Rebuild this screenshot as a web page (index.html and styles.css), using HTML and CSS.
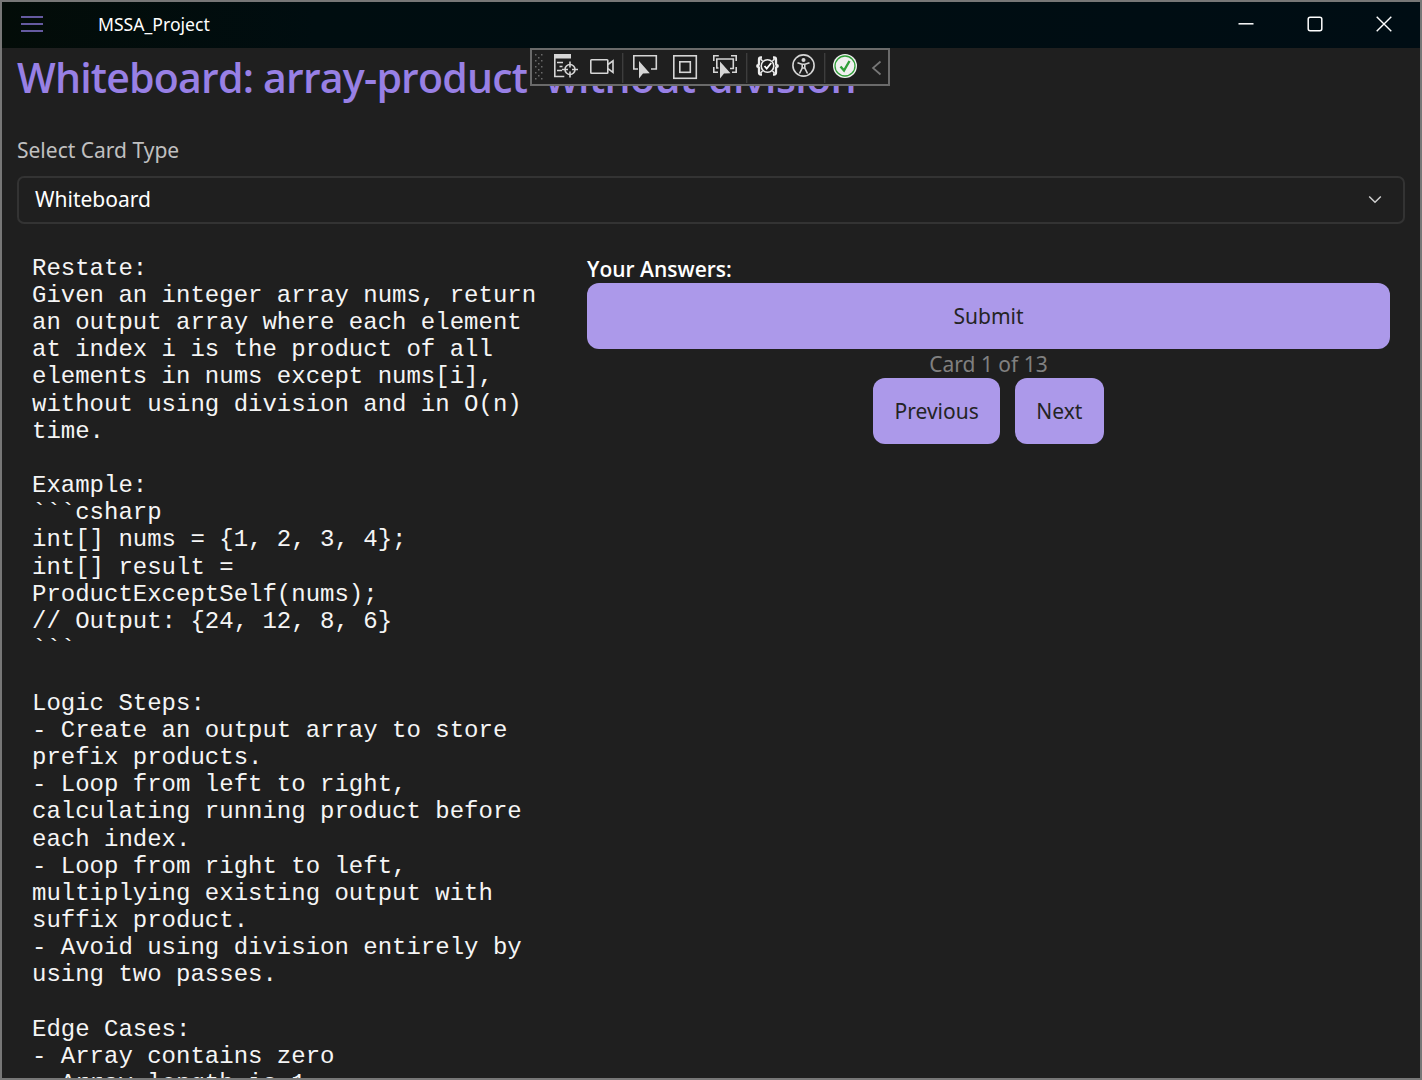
FILE: index.html
```html
<!DOCTYPE html>
<html lang="en">
<head>
<meta charset="utf-8">
<title>MSSA_Project</title>
<link rel="stylesheet" href="styles.css">
</head>
<body>
<div class="window">
  <header class="titlebar">
    <svg class="menu" width="22" height="18" viewBox="0 0 22 18" fill="none" stroke="#8674d2" stroke-width="1.6"><path d="M0 2h22M0 9h22M0 16h22"/></svg>
    <span class="app-name">MSSA_Project</span>
    <div class="controls">
      <svg width="16" height="16" viewBox="0 0 16 16" fill="none" stroke="#fff" stroke-width="1.5"><path d="M.5 7.800h15"/></svg>
      <svg width="16" height="16" viewBox="0 0 16 16" fill="none" stroke="#fff" stroke-width="1.5"><rect x="1.200" y="1.200" width="13.600" height="13.600" rx="2"/></svg>
      <svg width="16" height="16" viewBox="0 0 16 16" fill="none" stroke="#fff" stroke-width="1.4"><path d="M.7.7l14.600 14.600M15.300.7L.7 15.300"/></svg>
    </div>
  </header>

  <main class="page">
    <h1 class="heading"><span class="heading-start">Whiteboard: array-produc</span><span class="heading-join">t-</span>without-division</h1>
    <label class="label">Select Card Type</label>
    <div class="picker">
      <span>Whiteboard</span>
      <svg width="14" height="9" viewBox="0 0 14 9" fill="none" stroke="#d0d0d0" stroke-width="1.5"><path d="M1.200 1.500L7 7.200l5.800-5.700"/></svg>
    </div>
    <div class="columns">
      <pre class="notes">Restate:
Given an integer array nums, return
an output array where each element
at index i is the product of all
elements in nums except nums[i],
without using division and in O(n)
time.

Example:
&#96;&#96;&#96;csharp
int[] nums = {1, 2, 3, 4};
int[] result =
ProductExceptSelf(nums);
// Output: {24, 12, 8, 6}
&#96;&#96;&#96;

Logic Steps:
- Create an output array to store
prefix products.
- Loop from left to right,
calculating running product before
each index.
- Loop from right to left,
multiplying existing output with
suffix product.
- Avoid using division entirely by
using two passes.

Edge Cases:
- Array contains zero
- Array length is 1</pre>
      <section class="answers">
        <h2 class="answers-title"><span>Your Answers:</span></h2>
        <button class="btn submit">Submit</button>
        <p class="count">Card 1 of 13</p>
        <div class="nav">
          <button class="btn">Previous</button>
          <button class="btn">Next</button>
        </div>
      </section>
    </div>
  </main>

  <div class="debugbar">
    <svg width="360" height="38" viewBox="0 0 360 38" fill="none" stroke="#d6d6d6" stroke-width="1.6">
      <defs><pattern id="grip" width="6" height="6" patternUnits="userSpaceOnUse" x="5" y="6"><path fill="#6a6a6a" stroke="none" d="M0 0h1.500v1.500H0zM3 3h1.500v1.500H3z"/></pattern></defs>
      <path fill="url(#grip)" stroke="none" d="M5 6h9v27H5z"/>
      <path fill="#d6d6d6" stroke="none" d="M24 6h17v4.500H24z"/>
      <path d="M24.800 10v18.500h9.500M27 14.500h6M29.500 18.500h3M27 22.500h5"/>
      <circle cx="40" cy="21.500" r="5"/><path d="M40 13.500v6M40 23.500v6M32 21.500h6M42 21.500h6"/>
      <rect x="60.800" y="11.800" width="17" height="13.500" rx=".8"/><path d="M78 16.500l5-3.700v11.500l-5-3.700"/>
      <path stroke="#3d3d3d" stroke-width="1.400" d="M92.700 5v30M216.700 5v30M294.700 5v30"/>
      <path d="M108 21h-4.200V7.800h22.500V21H121"/><path fill="#d6d6d6" stroke="none" d="M109 13v17.500l4-5 6.800-.3z"/>
      <rect x="143.800" y="7.800" width="22.500" height="22.500"/><rect x="149.800" y="13.800" width="10.500" height="10.500"/>
      <path d="M183.800 13V7.800h5M201 7.800h5.200V13M206.200 19v5.200H202M188 24.200h-4.200V19M188.500 20h-1.700v-9h16.500v9.500H200"/><path fill="#d6d6d6" stroke="none" d="M190 13.500v17l4-5 6.500-.3z"/>
      <path stroke="#ededed" stroke-width="2.300" d="M232 9.500h-1q-2 0-2 2v4q0 2-2.500 2.500 2.500.5 2.500 2.500v4q0 2 2 2h1M243 9.500h1q2 0 2 2v4q0 2 2.500 2.500-2.500.5-2.500 2.500v4q0 2-2 2h-1"/>
      <circle cx="237.500" cy="18" r="6.300" stroke="#ededed"/><path stroke="#fff" stroke-width="1.800" d="M234.500 18l2.200 2.600 4.500-5.600"/>
      <path stroke="#ededed" d="M232.500 13l-2-2M242.500 13l2-2M232.500 23l-2 2M242.500 23l2 2"/>
      <circle cx="273.500" cy="17.500" r="10.600" stroke-width="1.600"/><circle cx="273.500" cy="12" r="2" fill="#d6d6d6" stroke="none"/>
      <path d="M267.500 14.700l4.500 1.500h3l4.500-1.500M272.200 16v4l-2.700 5.500M274.800 16v4l2.700 5.500M272 20h3"/>
      <circle cx="315" cy="18" r="12" fill="#f0f0f0" stroke="none"/><circle cx="315" cy="18" r="10" stroke="#2f9e38" stroke-width="1.300"/><path stroke="#2f9e38" stroke-width="2.400" d="M310.500 18.500l3.500 4 5.500-9.500"/>
      <path stroke="#777" stroke-width="1.700" d="M350.500 13.500l-7.500 6.500 7.500 6.500"/>
    </svg>
  </div>
</div>
</body>
</html>
```
FILE: styles.css
```css
html { box-sizing: border-box; }
html * { box-sizing: inherit; }
body { margin: 0; background: #1f1f1f; font-family: "Noto Sans", "Open Sans", sans-serif; }
.window { position: relative; width: 1422px; height: 1080px; border: 2px solid #777; overflow: hidden; background: #1f1f1f; }
.titlebar { height: 46px; display: flex; align-items: center; padding: 0 28px 0 19px; background: linear-gradient(90deg, #030c08, #000d10 22%, #000d14); }
.menu { margin-top: -2px; }
.app-name { margin: -2px 0 0 55px; color: #fff; font-size: 17.6px; line-height: 24px; }
.controls { margin-left: auto; margin-top: -2px; display: flex; gap: 53px; }
.page { padding: 0 15px; }
.heading { margin: 0; height: 62px; font: 600 41px/59px "Open Sans", sans-serif; letter-spacing: -0.6px; color: #9880e5; white-space: nowrap; }
.heading-start { letter-spacing: -0.79px; }
.heading-join { letter-spacing: 2px; }
.label { display: block; height: 36px; margin-top: 24px; font-size: 21px; line-height: 32px; color: #c0c0c0; }
.picker { height: 48px; margin-top: 6px; border: 2px solid #333; border-radius: 7px; padding: 0 21px 2px 16px; display: flex; align-items: center; justify-content: space-between; color: #fff; font-size: 21px; }
.columns { display: grid; grid-template-columns: 555px 803px; padding: 30.6px 0 0 15px; }
.notes { margin: 0; font: 24px/27.180px "Liberation Mono", "Courier New", monospace; color: #f5f5f5; }
.answers { display: flex; flex-direction: column; align-items: center; padding-top: 0.4px; }
.answers-title { align-self: flex-start; margin: 0; height: 28px; font: 600 21px/28px "Open Sans", sans-serif; color: #fff; }
.btn { border: 0; border-radius: 12px; height: 66px; padding: 0 21.3px; background: #ac99ea; color: #242424; font: 21px "Noto Sans", sans-serif; }
.submit { width: 100%; }
.count { margin: 0; height: 29px; font-size: 21px; line-height: 30px; color: #808080; }
.nav { display: flex; gap: 15px; }
.debugbar { position: absolute; left: 528px; top: 46px; width: 360px; height: 38px; border: 2px solid #6a6a6a; background: #1f1f1f; }
.debugbar svg { display: block; margin: -2px; }
```
